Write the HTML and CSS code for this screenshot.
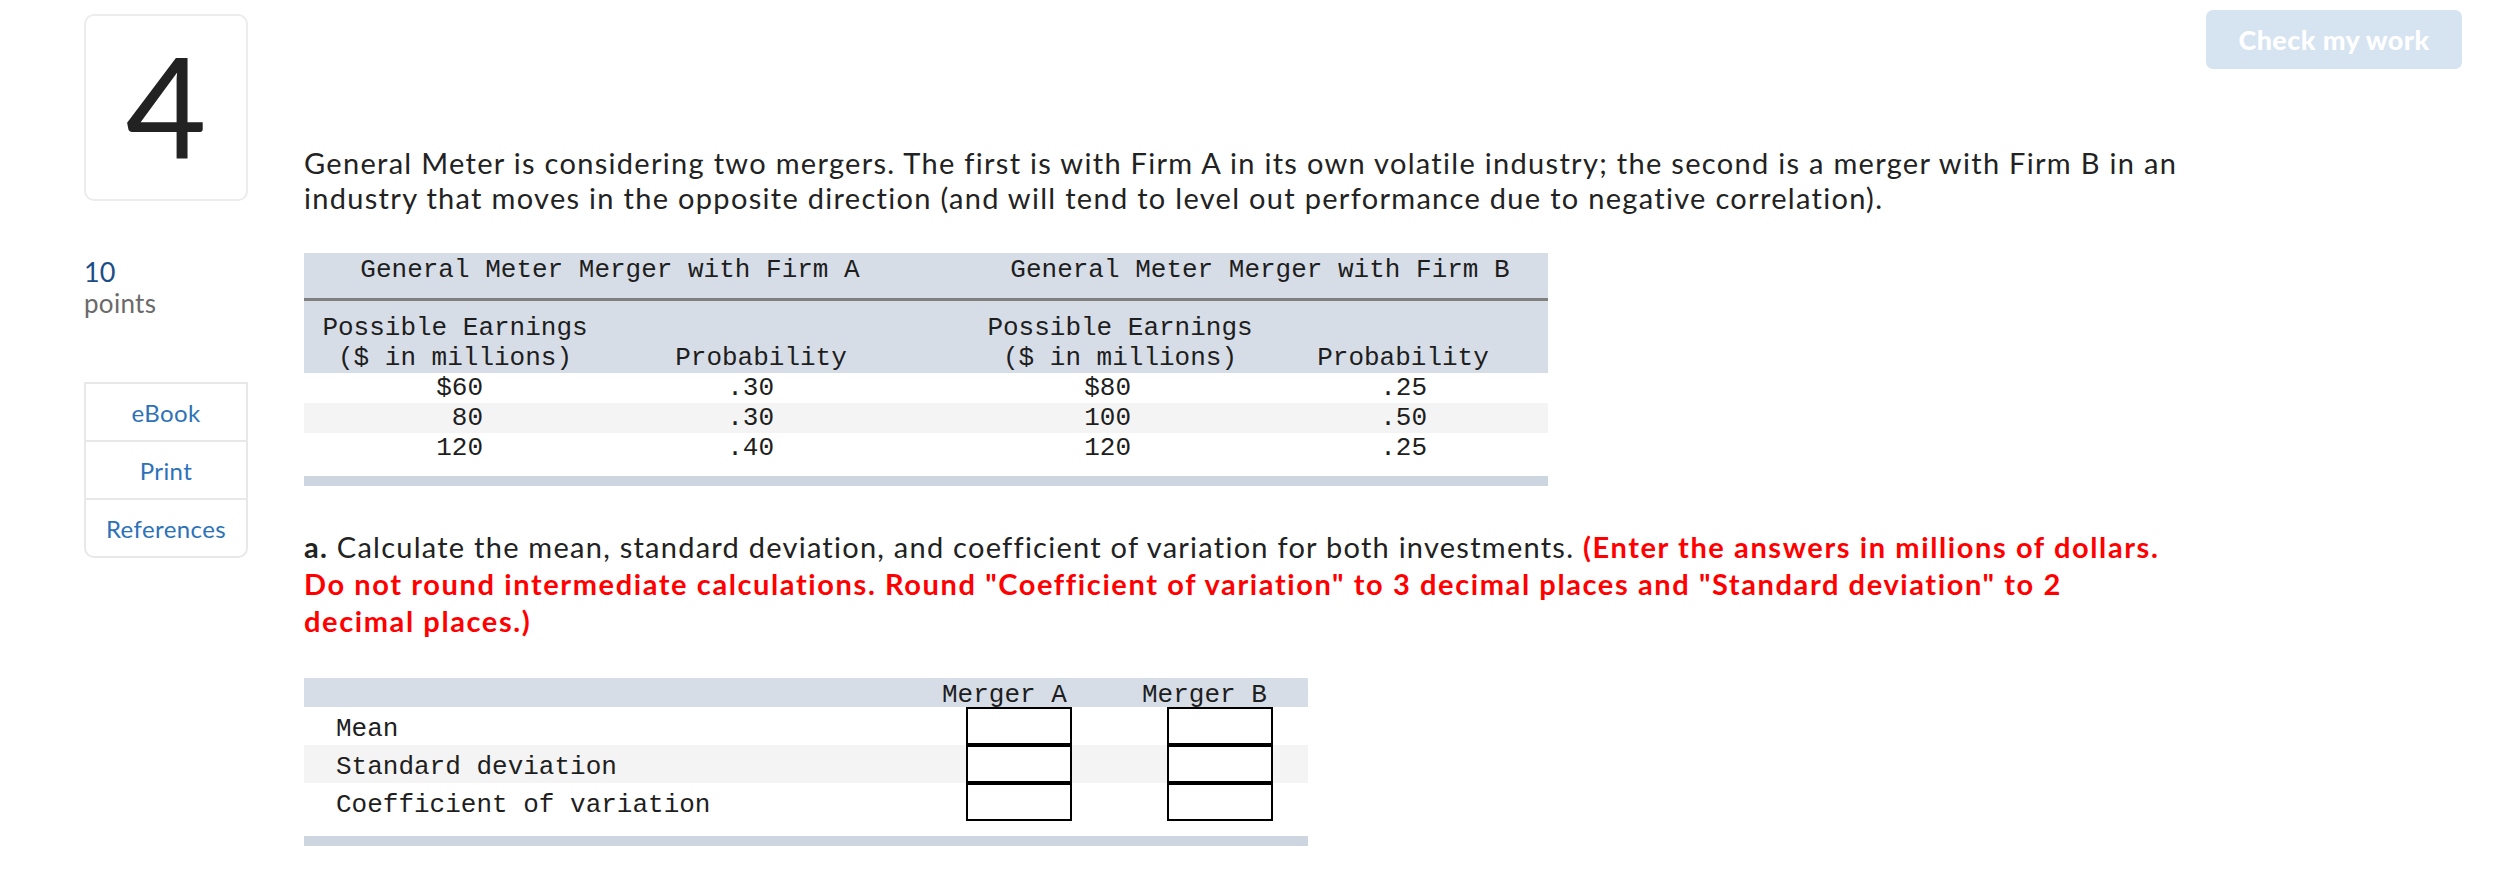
FILE: index.html
```html
<!DOCTYPE html>
<html lang="en">
<head>
<meta charset="utf-8">
<title>Question 4</title>
<link rel="stylesheet" href="styles.css">
</head>
<body>
<div class="page">
  <aside class="side">
    <div class="qnum">4</div>
    <div class="pts">
      <div class="pts-n">10</div>
      <div class="pts-l">points</div>
    </div>
    <ul class="links">
      <li>eBook</li>
      <li>Print</li>
      <li>References</li>
    </ul>
  </aside>
  <main class="content">
    <div class="toolbar"><button class="check" type="button">Check my work</button></div>
    <p class="intro">General Meter is considering two mergers. The first is with Firm A in its own volatile industry; the second is a merger with Firm B in an<br>industry that moves in the opposite direction (and will tend to level out performance due to negative correlation).</p>

    <div class="dt">
      <div class="dt-row dt-hdr">
        <div class="c-a">General Meter Merger with Firm A</div>
        <div class="c-b">General Meter Merger with Firm B</div>
      </div>
      <div class="dt-row dt-sub">
        <div class="c1 ctr">Possible Earnings<br>($ in millions)</div>
        <div class="c2 ctr bot">Probability</div>
        <div class="c4 ctr">Possible Earnings<br>($ in millions)</div>
        <div class="c5 ctr bot">Probability</div>
      </div>
      <div class="dt-row dt-data">
        <div class="c1 v1">$60</div><div class="c2 v2">.30</div><div class="c4 v4">$80</div><div class="c5 v5">.25</div>
      </div>
      <div class="dt-row dt-data alt">
        <div class="c1 v1">80</div><div class="c2 v2">.30</div><div class="c4 v4">100</div><div class="c5 v5">.50</div>
      </div>
      <div class="dt-row dt-data">
        <div class="c1 v1">120</div><div class="c2 v2">.40</div><div class="c4 v4">120</div><div class="c5 v5">.25</div>
      </div>
      <div class="dt-foot"></div>
    </div>

    <p class="q"><b class="qa">a.</b> Calculate the mean, standard deviation, and coefficient of variation for both investments. <strong class="red">(Enter the answers in millions of dollars.<br>Do not round intermediate calculations. Round "Coefficient of variation" to 3 decimal places and "Standard deviation" to 2<br>decimal places.)</strong></p>

    <div class="at">
      <div class="at-row at-hdr">
        <div></div>
        <div>Merger A</div>
        <div>Merger B</div>
      </div>
      <div class="at-row">
        <div class="lbl">Mean</div>
        <div><input class="box ba" type="text" aria-label="Mean Merger A"></div>
        <div><input class="box bb" type="text" aria-label="Mean Merger B"></div>
      </div>
      <div class="at-row alt">
        <div class="lbl">Standard deviation</div>
        <div><input class="box ba" type="text" aria-label="Standard deviation Merger A"></div>
        <div><input class="box bb" type="text" aria-label="Standard deviation Merger B"></div>
      </div>
      <div class="at-row">
        <div class="lbl">Coefficient of variation</div>
        <div><input class="box ba" type="text" aria-label="Coefficient of variation Merger A"></div>
        <div><input class="box bb" type="text" aria-label="Coefficient of variation Merger B"></div>
      </div>
      <div class="at-foot"></div>
    </div>
  </main>
</div>
</body>
</html>
```

FILE: styles.css
```css
html, body {
  margin: 0;
  padding: 0;
  background: #ffffff;
}

body {
  font-family: Lato, "Open Sans", sans-serif;
  color: #222222;
}

.page {
  display: flex;
  gap: 56px;
  padding: 10px 46px 0 84px;
}

/* ---------- sidebar ---------- */
.side {
  width: 164px;
  flex: none;
  display: flex;
  flex-direction: column;
}

.qnum {
  margin-top: 4px;
  height: 187px;
  box-sizing: border-box;
  border: 2px solid #ececec;
  border-radius: 10px;
  display: flex;
  align-items: center;
  justify-content: center;
  padding-bottom: 7px;
  font-size: 140px;
  line-height: 1;
  color: #222222;
}

.pts {
  margin-top: 55px;
}

.pts-n {
  font-size: 27px;
  line-height: 32px;
  color: #1b4d89;
}

.pts-l {
  font-size: 26px;
  line-height: 30px;
  letter-spacing: 0.3px;
  color: #6a6a6a;
}

.links {
  list-style: none;
  margin: 64px 0 0;
  padding: 0;
  border: 2px solid #e8e8e8;
  border-radius: 0 0 10px 10px;
}

.links li {
  height: 56px;
  display: flex;
  align-items: center;
  justify-content: center;
  font-size: 24px;
  letter-spacing: 0.4px;
  color: #2d72b8;
}

.links li + li {
  border-top: 2px solid #e8e8e8;
}

/* ---------- content ---------- */
.content {
  flex: 1;
  min-width: 0;
}

.toolbar {
  display: flex;
  justify-content: flex-end;
}

.check {
  width: 256px;
  height: 59px;
  border: 0;
  border-radius: 7px;
  background: #d6e3f0;
  color: #ffffff;
  font-family: Lato, sans-serif;
  font-weight: 900;
  font-size: 27px;
  letter-spacing: 0.4px;
  padding: 0;
}

.intro {
  margin: 76px 0 0;
  font-size: 29px;
  line-height: 35px;
  letter-spacing: 1.3px;
  white-space: nowrap;
}

/* ---------- data table ---------- */
.dt {
  margin-top: 38px;
  width: 1244px;
  font-family: "Liberation Mono", "DejaVu Sans Mono", monospace;
  font-size: 26px;
  color: #1e1e1e;
}

.dt-row {
  display: grid;
  grid-template-columns: 302px 310px 66px 276px 290px;
  line-height: 30px;
  white-space: nowrap;
}

.dt-hdr {
  background: #d6dde7;
  padding: 2px 0 13px;
  border-bottom: 3px solid #808080;
}

.c-a {
  grid-column: 1 / 3;
  text-align: center;
}

.c-b {
  grid-column: 4 / 6;
  text-align: center;
  padding-right: 10px;
}

.dt-sub {
  background: #d6dde7;
  padding-top: 12px;
}

.c1 { grid-column: 1; }
.c2 { grid-column: 2; }
.c4 { grid-column: 4; }
.c5 { grid-column: 5; }

.ctr { text-align: center; }
.bot { align-self: end; }

.dt-data {
  height: 30px;
}

.alt {
  background: #f4f4f4;
}

.v1 { text-align: right; padding-right: 123px; }
.v2 { text-align: right; padding-right: 142px; }
.v4 { text-align: right; padding-right: 127px; }
.v5 { text-align: right; padding-right: 121px; }

.dt-foot {
  margin-top: 13px;
  height: 10px;
  background: #cdd5e0;
}

/* ---------- question ---------- */
.q {
  margin: 42px 0 0;
  font-size: 29px;
  line-height: 37px;
  letter-spacing: 1.25px;
  white-space: nowrap;
}

.qa {
  font-weight: 700;
  color: #222222;
}

.red {
  color: #ff0000;
  font-weight: 700;
  letter-spacing: 1.6px;
}

/* ---------- answer table ---------- */
.at {
  margin-top: 39px;
  width: 1004px;
  font-family: "Liberation Mono", "DejaVu Sans Mono", monospace;
  font-size: 26px;
  color: #1e1e1e;
}

.at-row {
  display: grid;
  grid-template-columns: 638px 200px 166px;
  height: 38px;
  white-space: nowrap;
}

.at-hdr {
  height: 29px;
  box-sizing: border-box;
  padding-top: 5px;
  line-height: 24px;
  background: #d6dde7;
}

.lbl {
  padding: 3px 0 0 32px;
  line-height: 38px;
  height: 35px;
}

.box {
  display: block;
  width: 106px;
  height: 38px;
  box-sizing: border-box;
  border: 2px solid #000000;
  border-radius: 0;
  background: #ffffff;
  padding: 0;
  margin: 0;
}

.ba { margin-left: 24px; }
.bb { margin-left: 25px; }

.at-foot {
  margin-top: 15px;
  height: 10px;
  background: #cdd5e0;
}
```
